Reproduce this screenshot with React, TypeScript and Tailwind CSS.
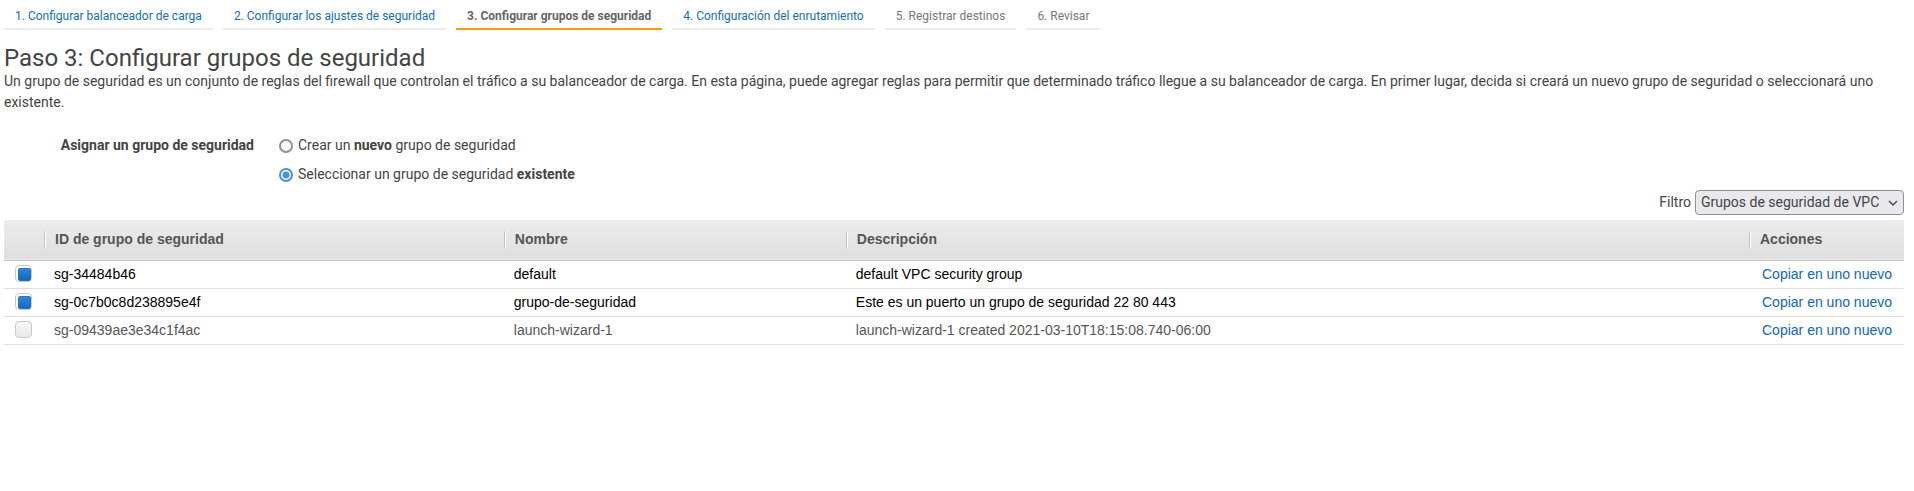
import { useState } from "react";
import clsx from "clsx";

type StepState = "link" | "current" | "pending";

const steps: { label: string; state: StepState }[] = [
  { label: "1. Configurar balanceador de carga", state: "link" },
  { label: "2. Configurar los ajustes de seguridad", state: "link" },
  { label: "3. Configurar grupos de seguridad", state: "current" },
  { label: "4. Configuración del enrutamiento", state: "link" },
  { label: "5. Registrar destinos", state: "pending" },
  { label: "6. Revisar", state: "pending" },
];

const groups = [
  { id: "sg-34484b46", name: "default", description: "default VPC security group" },
  {
    id: "sg-0c7b0c8d238895e4f",
    name: "grupo-de-seguridad",
    description: "Este es un puerto un grupo de seguridad 22 80 443",
  },
  {
    id: "sg-09439ae3e34c1f4ac",
    name: "launch-wizard-1",
    description: "launch-wizard-1 created 2021-03-10T18:15:08.740-06:00",
  },
];

function Steps() {
  return (
    <nav aria-label="Pasos">
      <ol className="flex gap-[10px] text-[12px] leading-4">
        {steps.map(({ label, state }) => (
          <li
            key={label}
            className={clsx(
              "border-b-2 px-[11px] pt-2 pb-1",
              state === "current" ? "border-[#ff9914] font-bold text-[#666]" : "border-[#ebebeb]",
              state === "pending" && "text-[#777]",
            )}
            aria-current={state === "current" ? "step" : undefined}
          >
            {state === "link" ? (
              <a href="#" className="text-[#146eb4]">
                {label}
              </a>
            ) : (
              label
            )}
          </li>
        ))}
      </ol>
    </nav>
  );
}

const radioClass =
  "size-[14px] shrink-0 appearance-none rounded-full border-2 border-[#8f8f9d] bg-white checked:border-[#4a90d9] checked:bg-[radial-gradient(circle,#4a90d9_3px,#fff_4px)]";

function HeaderCell({ children }: { children: string }) {
  return (
    <th scope="col" className="p-0 text-left font-bold">
      <div className="flex h-[18px] items-center border-l border-[#c4c4c4]">
        <span className="flex h-full items-center border-l border-white pl-[9px]">{children}</span>
      </div>
    </th>
  );
}

export default function App() {
  const [mode, setMode] = useState("existing");
  const [selected, setSelected] = useState<string[]>([groups[0].id, groups[1].id]);

  const toggle = (id: string) =>
    setSelected((ids) => (ids.includes(id) ? ids.filter((x) => x !== id) : [...ids, id]));

  return (
    <main className="pr-[10px] pl-1 font-['Roboto',sans-serif] text-[14px] leading-[21px] text-[#444]">
      <Steps />

      <h1 className="mt-[14px] text-[24px] leading-7">Paso 3: Configurar grupos de seguridad</h1>
      <p className="-mt-px">
        Un grupo de seguridad es un conjunto de reglas del firewall que controlan el tráfico a su balanceador de
        carga. En esta página, puede agregar reglas para permitir que determinado tráfico llegue a su balanceador de
        carga. En primer lugar, decida si creará un nuevo grupo de seguridad o seleccionará uno existente.
      </p>

      <div role="radiogroup" aria-labelledby="assign" className="mt-[22px] flex gap-[25px]">
        <div id="assign" className="w-[250px] text-right font-bold">
          Asignar un grupo de seguridad
        </div>
        <div className="flex flex-col items-start gap-2">
          <label className="flex items-center gap-[5px]">
            <input
              type="radio"
              name="mode"
              className={radioClass}
              checked={mode === "new"}
              onChange={() => setMode("new")}
            />
            <span>
              Crear un <b>nuevo</b> grupo de seguridad
            </span>
          </label>
          <label className="flex items-center gap-[5px]">
            <input
              type="radio"
              name="mode"
              className={radioClass}
              checked={mode === "existing"}
              onChange={() => setMode("existing")}
            />
            <span>
              Seleccionar un grupo de seguridad <b>existente</b>
            </span>
          </label>
        </div>
      </div>

      <div className="mt-[5px] flex items-center justify-end gap-1">
        <label htmlFor="filter">Filtro</label>
        <div className="grid items-center">
          <select
            id="filter"
            className="col-start-1 row-start-1 h-[25px] appearance-none rounded-[4px] border border-[#8f8f9d] bg-[#e9e9ed] pr-[23px] pl-[5px] text-[14px] leading-[21px]"
          >
            <option>Grupos de seguridad de VPC</option>
          </select>
          <svg
            viewBox="0 0 10 6"
            className="pointer-events-none col-start-1 row-start-1 mr-[6px] h-[6px] w-[10px] justify-self-end"
            fill="none"
            stroke="#444"
            strokeWidth="1.4"
            aria-hidden="true"
          >
            <path d="M1 1l4 4 4-4" />
          </svg>
        </div>
      </div>

      <table className="mt-[5px] w-full table-fixed border-collapse font-['Liberation_Sans',sans-serif] text-[14px] leading-[17px]">
        <colgroup>
          <col className="w-[40px]" />
          <col className="w-[24.2%]" />
          <col className="w-[18%]" />
          <col />
          <col className="w-[155px]" />
        </colgroup>
        <thead>
          <tr className="h-[40px] border-b border-[#c4c4c4] bg-linear-to-b from-[#ededed] to-[#dedede] text-[#555]">
            <th scope="col" aria-label="Seleccionar" className="p-0" />
            <HeaderCell>ID de grupo de seguridad</HeaderCell>
            <HeaderCell>Nombre</HeaderCell>
            <HeaderCell>Descripción</HeaderCell>
            <HeaderCell>Acciones</HeaderCell>
          </tr>
        </thead>
        <tbody>
          {groups.map(({ id, name, description }) => {
            const checked = selected.includes(id);
            return (
              <tr key={id} className={clsx("h-7 border-b border-[#ddd]", checked ? "text-black" : "text-[#555]")}>
                <td className="p-0 pl-[11px]">
                  <label className="mb-[2px] grid size-[17px]">
                    <input
                      type="checkbox"
                      aria-label={id}
                      checked={checked}
                      onChange={() => toggle(id)}
                      className="peer col-start-1 row-start-1 size-[17px] appearance-none rounded-[4px] border border-[#c8c8c8] bg-linear-to-b from-[#f6f6f6] to-[#e9e9e9] checked:from-white checked:to-white"
                    />
                    <span className="pointer-events-none col-start-1 row-start-1 mr-px mb-px hidden size-[13px] place-self-end rounded-[2px] border border-[#2474c8] bg-linear-to-b from-[#2d86dc] to-[#1467c0] peer-checked:block" />
                  </label>
                </td>
                <td className="p-0 pt-px pl-[10px]">{id}</td>
                <td className="p-0 pt-px pl-[10px]">{name}</td>
                <td className="p-0 pt-px pl-[10px]">{description}</td>
                <td className="p-0 pt-px pl-[13px] whitespace-nowrap">
                  <a href="#" className="text-[#1166bb]">
                    Copiar en uno nuevo
                  </a>
                </td>
              </tr>
            );
          })}
        </tbody>
      </table>
    </main>
  );
}
